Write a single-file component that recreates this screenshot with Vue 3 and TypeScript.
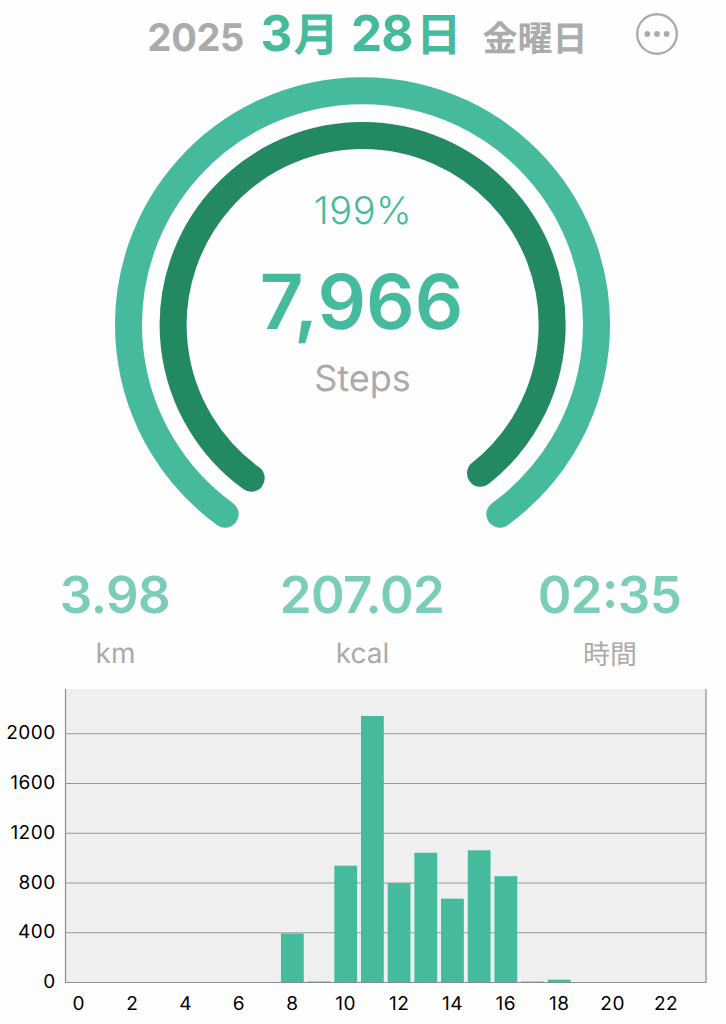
<script setup lang="ts">
interface Stat {
  value: string
  unit: string
  kind: string
}

const stats: Stat[] = [
  { value: '3.98', unit: 'km', kind: 'distance' },
  { value: '207.02', unit: 'kcal', kind: 'energy' },
  { value: '02:35', unit: '時間', kind: 'time' },
]

// Steps counted in each hour of the day
const hourly: number[] = [0, 0, 0, 0, 0, 0, 0, 0, 394, 8, 939, 2143, 800, 1043, 674, 1063, 855, 8, 23, 0, 0, 0, 0, 0]

const plot = { left: 65.5, right: 706, top: 9, bottom: 302.5 }
const slot = (plot.right - plot.left) / 24
const barWidth = 22.8
const ticks = [2000, 1600, 1200, 800, 400, 0]
const yOf = (v: number): number => plot.bottom - (v * 49.75) / 400
const xOf = (h: number): number => plot.left + slot * (h + 0.5)
const bars = hourly.map((v, h) => ({ h, x: xOf(h) - barWidth / 2, y: yOf(v), height: plot.bottom - yOf(v) })).filter((b) => b.height > 0)
const hours = Array.from({ length: 12 }, (_, i) => i * 2)
</script>

<template>
  <main class="screen">
    <header class="header">
      <span class="year">2025</span>
      <span class="date"><span class="number">3</span><span class="kanji month">月</span><span class="number day">28</span><span class="kanji">日</span></span>
      <span class="weekday">金曜日</span>
      <button class="more" aria-label="メニュー">
        <svg width="44" height="44" viewBox="0 0 44 44">
          <circle cx="22" cy="22" r="19.8" fill="none" stroke="#ababab" stroke-width="2.4" />
          <circle cx="12.4" cy="22" r="2.9" fill="#ababab" />
          <circle cx="22" cy="22" r="2.9" fill="#ababab" />
          <circle cx="31.6" cy="22" r="2.9" fill="#ababab" />
        </svg>
      </button>
    </header>

    <svg class="gauge" width="726" height="470" viewBox="0 70 726 470">
      <g fill="none" stroke-width="27" stroke-linecap="round">
        <path d="M225.2 514.2A234 234 0 1 1 499.8 514.2" stroke="#45ba9d" />
        <path d="M251.2 478.2A189.5 189.5 0 1 1 480.5 473.3" stroke="#238962" />
      </g>
      <g text-anchor="middle">
        <text class="percent" x="363" y="223.5">199%</text>
        <text class="steps" x="361.5" y="329">7,966</text>
        <text class="caption" x="362.5" y="391">Steps</text>
      </g>
    </svg>

    <section class="stats">
      <div v-for="s in stats" :key="s.kind" class="stat" :class="s.kind">
        <div class="value">{{ s.value }}</div>
        <div class="unit">{{ s.unit }}</div>
      </div>
    </section>

    <svg class="chart" width="726" height="344" viewBox="0 0 726 344">
      <rect :x="plot.left" :y="plot.top" :width="plot.right - plot.left" :height="plot.bottom - plot.top" fill="#efefef" />
      <g stroke="#999" stroke-width="1.2">
        <line v-for="t in ticks" :key="t" :x1="plot.left" :x2="plot.right" :y1="yOf(t)" :y2="yOf(t)" />
      </g>
      <path :d="`M${plot.left} ${plot.top}V${plot.bottom}H${plot.right}V${plot.top}`" fill="none" stroke="#8c8c8c" stroke-width="1.2" />
      <rect v-for="b in bars" :key="b.h" :x="b.x" :y="b.y" :width="barWidth" :height="b.height - 0.4" fill="#45ba9d" />
      <g class="axis" text-anchor="end">
        <text v-for="t in ticks" :key="t" x="55.7" :y="yOf(t) + 5.6">{{ t }}</text>
      </g>
      <g class="axis" text-anchor="middle">
        <text v-for="h in hours" :key="h" :x="xOf(h)" y="329.5">{{ h }}</text>
      </g>
    </svg>
  </main>
</template>

<style>
body {
  margin: 0;
  background: #fefefe;
}
</style>

<style scoped>
.screen {
  width: 726px;
  height: 1024px;
  overflow: hidden;
  background: #fefefe;
  font-family: Inter, "Noto Sans CJK JP", sans-serif;
  text-rendering: geometricPrecision;
}
.header {
  display: flex;
  align-items: baseline;
  height: 70px;
  line-height: 67px;
  font-weight: 700;
  white-space: nowrap;
  color: #ababab;
}
.year {
  width: 113px;
  padding-left: 147.5px;
  font-size: 38px;
  letter-spacing: -0.3px;
}
.date {
  display: flex;
  align-items: baseline;
  width: 222px;
  font-size: 49.5px;
  color: #45ba9d;
}
.number {
  width: 33px;
}
.day {
  width: 65px;
  letter-spacing: -1px;
}
.kanji {
  font-size: 45.5px;
  font-weight: 700;
}
.month {
  margin-right: 12px;
}
.weekday {
  width: 152px;
  font-size: 35px;
}
.more {
  display: flex;
  align-self: flex-start;
  margin-top: 12px;
  padding: 0;
  border: 0;
  background: none;
}
.gauge,
.chart {
  display: block;
}
.percent {
  font-size: 38px;
  font-weight: 300;
  letter-spacing: 0.5px;
  fill: #45ba9d;
}
.steps {
  font-size: 76px;
  font-weight: 600;
  fill: #45ba9d;
}
.caption {
  font-size: 36px;
  fill: #ababab;
}
.stats {
  display: grid;
  grid-template-columns: 230px 264px 231px;
  height: 140px;
  text-align: center;
}
.value {
  height: 80px;
  padding-top: 22px;
  box-sizing: border-box;
  line-height: 68px;
  font-size: 51px;
  font-weight: 600;
  letter-spacing: -0.5px;
  font-feature-settings: "case" 1;
  color: #7bcdb8;
}
.unit {
  padding-left: 1px;
  line-height: 67px;
  font-size: 28px;
  color: #ababab;
}
.time .unit {
  font-size: 27px;
  line-height: 69px;
}
.axis {
  font-size: 19px;
  letter-spacing: 0.5px;
  fill: #000;
}
</style>
